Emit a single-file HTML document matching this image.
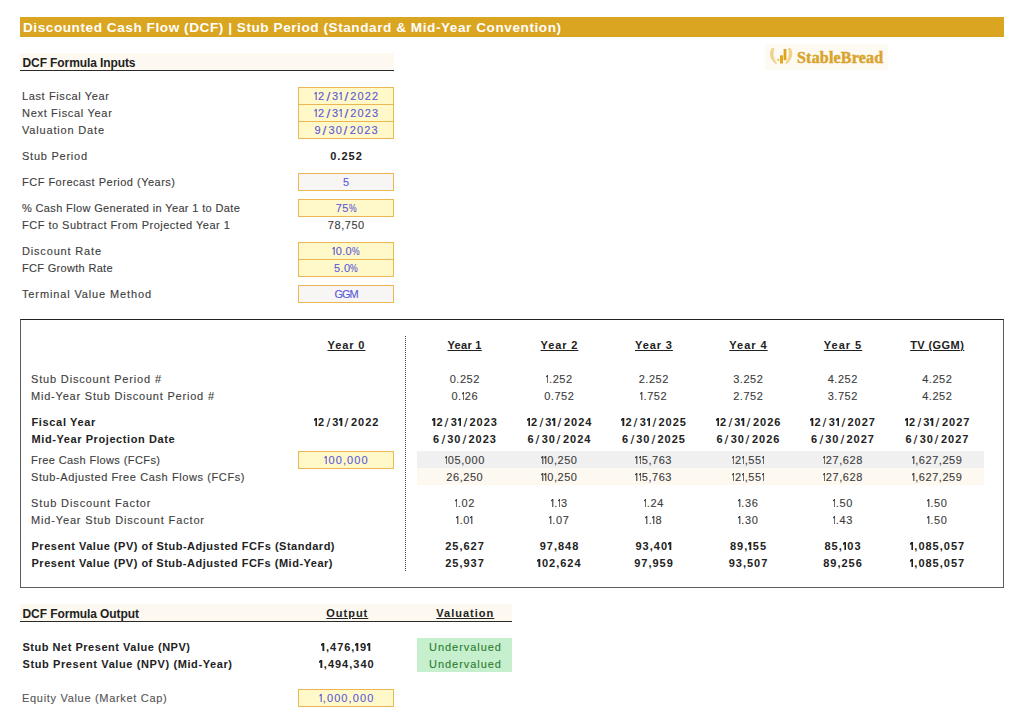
<!DOCTYPE html>
<html><head><meta charset="utf-8"><style>
html,body{margin:0;padding:0;background:#fff;width:1024px;height:723px;overflow:hidden;position:relative;}
.t{position:absolute;font-family:"Liberation Sans",sans-serif;font-size:11px;line-height:17px;white-space:nowrap;-webkit-text-stroke:0.12px currentColor;}
.b{position:absolute;}
.title{color:#fff;font-weight:bold;font-size:13.6px;-webkit-text-stroke:0;}
.logo{font-family:"Liberation Serif",serif;font-weight:bold;font-size:16px;-webkit-text-stroke:0.45px currentColor;color:#d9a42c;letter-spacing:0.2px;}
.lb{color:#3d3d3d;}
.bh{color:#222222;font-weight:bold;-webkit-text-stroke:0;}
.bv{color:#222222;font-weight:bold;-webkit-text-stroke:0;}
.nv{color:#3d3d3d;}
.in{color:#5a5ad8;}
.gr{color:#2e7d32;}
.big{font-size:12px;}
.pc{display:inline-block;transform:scaleX(0.78);margin:0 -1.1px;}
.sl{display:inline-block;transform:scale(1.25,1.15);}
.one{vertical-align:baseline;fill:currentColor;}
.u{text-decoration:underline;text-underline-offset:1px;}
</style></head><body>
<div class="b" style="left:20px;top:17px;width:984px;height:20px;background:#daa520;"></div>
<div class="t title" style="left:23px;top:17.6px;line-height:20px;letter-spacing:0.549px">Discounted Cash Flow (DCF) | Stub Period (Standard &amp; Mid-Year Convention)</div>
<div class="b" style="left:765px;top:44px;width:123px;height:26px;background:#fdfaf3;"></div>
<svg class="b" style="left:764px;top:42px" width="36" height="28" viewBox="0 0 36 28">
<path d="M8,6 C5,9.5 4.5,17 12.3,22.2 L13,20.7 C9.8,17.8 8.5,12 10.3,6 Z" fill="#f0d28c"/>
<path d="M26.3,6 C29.3,9.5 29.8,17 22,22.2 L21.3,20.7 C24.5,17.8 25.8,12 24,6 Z" fill="#f0d28c"/>
<rect x="13.3" y="16.8" width="1.9" height="2.2" fill="#e5c050"/>
<rect x="16" y="13.3" width="3" height="8.3" rx="0.6" fill="#e2a920"/>
<rect x="19.6" y="7" width="2.8" height="11.2" rx="0.6" fill="#e0a31c"/>
</svg>
<div class="t logo" style="left:797px;top:45px;line-height:26px;">StableBread</div>
<div class="b" style="left:20px;top:53px;width:374px;height:17px;background:#fdf9f1;"></div>
<div class="b" style="left:20px;top:70px;width:374px;height:1px;background:#2a2a2a;"></div>
<div class="t bh big" style="top:55px;left:22.5px;letter-spacing:-0.098px;">DCF Formula Inputs</div>
<div class="b" style="left:298px;top:87px;width:96px;height:52px;background:#fff8c9;box-sizing:border-box;border:1px solid #eab752;"></div>
<div class="b" style="left:298px;top:104px;width:96px;height:1px;background:#eab752;"></div>
<div class="b" style="left:298px;top:121px;width:96px;height:1px;background:#eab752;"></div>
<div class="b" style="left:298px;top:173px;width:96px;height:18px;background:#f7f6f4;box-sizing:border-box;border:1px solid #eab752;"></div>
<div class="b" style="left:298px;top:199px;width:96px;height:18px;background:#fff8c9;box-sizing:border-box;border:1px solid #eab752;"></div>
<div class="b" style="left:298px;top:242px;width:96px;height:35px;background:#fff8c9;box-sizing:border-box;border:1px solid #eab752;"></div>
<div class="b" style="left:298px;top:259px;width:96px;height:1px;background:#eab752;"></div>
<div class="b" style="left:298px;top:285px;width:96px;height:18px;background:#f7f6f4;box-sizing:border-box;border:1px solid #eab752;"></div>
<div class="t lb" style="top:88px;left:22px;letter-spacing:0.610px;">Last Fiscal Year</div>
<div class="t in" style="top:88px;left:298.0px;width:96px;text-align:center;padding-left:1.10px;box-sizing:border-box;letter-spacing:1.100px;"><svg class="one" width="3.0" height="8" viewBox="0 0 3.0 8" style="margin-right:1.1px"><path d="M1.65 0H2.75V8H1.65V1.7L0.45 2.4V1.3Z"/></svg>2<span class="sl" style="margin:0 1.38px;">/</span>3<svg class="one" width="3.0" height="8" viewBox="0 0 3.0 8" style="margin-right:1.1px"><path d="M1.65 0H2.75V8H1.65V1.7L0.45 2.4V1.3Z"/></svg><span class="sl" style="margin:0 1.38px;">/</span>2022</div>
<div class="t lb" style="top:105px;left:22px;letter-spacing:0.688px;">Next Fiscal Year</div>
<div class="t in" style="top:105px;left:298.0px;width:96px;text-align:center;padding-left:1.10px;box-sizing:border-box;letter-spacing:1.100px;"><svg class="one" width="3.0" height="8" viewBox="0 0 3.0 8" style="margin-right:1.1px"><path d="M1.65 0H2.75V8H1.65V1.7L0.45 2.4V1.3Z"/></svg>2<span class="sl" style="margin:0 1.38px;">/</span>3<svg class="one" width="3.0" height="8" viewBox="0 0 3.0 8" style="margin-right:1.1px"><path d="M1.65 0H2.75V8H1.65V1.7L0.45 2.4V1.3Z"/></svg><span class="sl" style="margin:0 1.38px;">/</span>2023</div>
<div class="t lb" style="top:122px;left:22px;letter-spacing:0.820px;">Valuation Date</div>
<div class="t in" style="top:122px;left:298.0px;width:96px;text-align:center;padding-left:1.10px;box-sizing:border-box;letter-spacing:1.100px;">9<span class="sl" style="margin:0 1.38px;">/</span>30<span class="sl" style="margin:0 1.38px;">/</span>2023</div>
<div class="t lb" style="top:148px;left:22px;letter-spacing:0.752px;">Stub Period</div>
<div class="t bv" style="top:148px;left:298.0px;width:96px;text-align:center;padding-left:1.00px;box-sizing:border-box;letter-spacing:1.000px;">0.252</div>
<div class="t lb" style="top:174px;left:22px;letter-spacing:0.493px;">FCF Forecast Period (Years)</div>
<div class="t in" style="top:174px;left:298.0px;width:96px;text-align:center;padding-left:1.10px;box-sizing:border-box;letter-spacing:1.100px;">5</div>
<div class="t lb" style="top:200px;left:22px;letter-spacing:0.357px;">% Cash Flow Generated in Year 1 to Date</div>
<div class="t in" style="top:200px;left:298.0px;width:96px;text-align:center;padding-left:0.35px;box-sizing:border-box;letter-spacing:0.350px;">75<span class="pc">%</span></div>
<div class="t lb" style="top:217px;left:22px;letter-spacing:0.491px;">FCF to Subtract From Projected Year 1</div>
<div class="t nv" style="top:217px;left:298.0px;width:96px;text-align:center;padding-left:0.55px;box-sizing:border-box;letter-spacing:0.550px;">78,750</div>
<div class="t lb" style="top:243px;left:22px;letter-spacing:0.826px;">Discount Rate</div>
<div class="t in" style="top:243px;left:298.0px;width:96px;text-align:center;padding-left:0.35px;box-sizing:border-box;letter-spacing:0.350px;"><svg class="one" width="3.0" height="8" viewBox="0 0 3.0 8" style="margin-right:0.35px"><path d="M1.65 0H2.75V8H1.65V1.7L0.45 2.4V1.3Z"/></svg>0.0<span class="pc">%</span></div>
<div class="t lb" style="top:260px;left:22px;letter-spacing:0.315px;">FCF Growth Rate</div>
<div class="t in" style="top:260px;left:298.0px;width:96px;text-align:center;padding-left:0.35px;box-sizing:border-box;letter-spacing:0.350px;">5.0<span class="pc">%</span></div>
<div class="t lb" style="top:286px;left:22px;letter-spacing:0.866px;">Terminal Value Method</div>
<div class="t in" style="top:286px;left:298.0px;width:96px;text-align:center;padding-left:-1.04px;box-sizing:border-box;letter-spacing:-1.038px;">GGM</div>
<div class="b" style="left:20px;top:319px;width:984px;height:269px;background:#ffffff;box-sizing:border-box;border:1px solid #5c5c5c;border-top-color:#222;"></div>
<div class="b" style="left:405px;top:336px;width:0;height:235px;border-left:1px dotted #444;"></div>
<div class="t bh u" style="top:337px;left:301.0px;width:90px;text-align:center;padding-left:0.92px;box-sizing:border-box;letter-spacing:0.916px;">Year 0</div>
<div class="t bh u" style="top:337px;left:419.5px;width:90px;text-align:center;padding-left:0.32px;box-sizing:border-box;letter-spacing:0.316px;">Year 1</div>
<div class="t bh u" style="top:337px;left:514.0px;width:90px;text-align:center;padding-left:0.92px;box-sizing:border-box;letter-spacing:0.916px;">Year 2</div>
<div class="t bh u" style="top:337px;left:608.5px;width:90px;text-align:center;padding-left:0.92px;box-sizing:border-box;letter-spacing:0.916px;">Year 3</div>
<div class="t bh u" style="top:337px;left:703.0px;width:90px;text-align:center;padding-left:1.00px;box-sizing:border-box;letter-spacing:0.996px;">Year 4</div>
<div class="t bh u" style="top:337px;left:797.5px;width:90px;text-align:center;padding-left:1.00px;box-sizing:border-box;letter-spacing:0.996px;">Year 5</div>
<div class="t bh u" style="top:337px;left:892.0px;width:90px;text-align:center;padding-left:0.43px;box-sizing:border-box;letter-spacing:0.427px;">TV (GGM)</div>
<div class="b" style="left:417px;top:451px;width:567px;height:17px;background:#f0f0f0;"></div>
<div class="b" style="left:417px;top:468px;width:567px;height:17px;background:#fdf9f1;"></div>
<div class="b" style="left:298px;top:451px;width:96px;height:18px;background:#fff8c9;box-sizing:border-box;border:1px solid #eab752;"></div>
<div class="t lb" style="top:371px;left:31px;letter-spacing:0.833px;">Stub Discount Period #</div>
<div class="t nv" style="top:371px;left:417.5px;width:94px;text-align:center;padding-left:0.55px;box-sizing:border-box;letter-spacing:0.550px;">0.252</div>
<div class="t nv" style="top:371px;left:512.0px;width:94px;text-align:center;padding-left:0.55px;box-sizing:border-box;letter-spacing:0.550px;"><svg class="one" width="2.6" height="8" viewBox="0 0 2.6 8" style="margin-right:0.55px"><path d="M1.25 0H2.35V8H1.25V1.7L0.05 2.4V1.3Z"/></svg>.252</div>
<div class="t nv" style="top:371px;left:606.5px;width:94px;text-align:center;padding-left:0.55px;box-sizing:border-box;letter-spacing:0.550px;">2.252</div>
<div class="t nv" style="top:371px;left:701.0px;width:94px;text-align:center;padding-left:0.55px;box-sizing:border-box;letter-spacing:0.550px;">3.252</div>
<div class="t nv" style="top:371px;left:795.5px;width:94px;text-align:center;padding-left:0.55px;box-sizing:border-box;letter-spacing:0.550px;">4.252</div>
<div class="t nv" style="top:371px;left:890.0px;width:94px;text-align:center;padding-left:0.55px;box-sizing:border-box;letter-spacing:0.550px;">4.252</div>
<div class="t lb" style="top:388px;left:31px;letter-spacing:0.794px;">Mid-Year Stub Discount Period #</div>
<div class="t nv" style="top:388px;left:417.5px;width:94px;text-align:center;padding-left:0.55px;box-sizing:border-box;letter-spacing:0.550px;">0.<svg class="one" width="2.6" height="8" viewBox="0 0 2.6 8" style="margin-right:0.55px"><path d="M1.25 0H2.35V8H1.25V1.7L0.05 2.4V1.3Z"/></svg>26</div>
<div class="t nv" style="top:388px;left:512.0px;width:94px;text-align:center;padding-left:0.55px;box-sizing:border-box;letter-spacing:0.550px;">0.752</div>
<div class="t nv" style="top:388px;left:606.5px;width:94px;text-align:center;padding-left:0.55px;box-sizing:border-box;letter-spacing:0.550px;"><svg class="one" width="2.6" height="8" viewBox="0 0 2.6 8" style="margin-right:0.55px"><path d="M1.25 0H2.35V8H1.25V1.7L0.05 2.4V1.3Z"/></svg>.752</div>
<div class="t nv" style="top:388px;left:701.0px;width:94px;text-align:center;padding-left:0.55px;box-sizing:border-box;letter-spacing:0.550px;">2.752</div>
<div class="t nv" style="top:388px;left:795.5px;width:94px;text-align:center;padding-left:0.55px;box-sizing:border-box;letter-spacing:0.550px;">3.752</div>
<div class="t nv" style="top:388px;left:890.0px;width:94px;text-align:center;padding-left:0.55px;box-sizing:border-box;letter-spacing:0.550px;">4.252</div>
<div class="t bh" style="top:414px;left:31.5px;letter-spacing:0.651px;">Fiscal Year</div>
<div class="t bv" style="top:414px;left:299.0px;width:94px;text-align:center;padding-left:1.00px;box-sizing:border-box;letter-spacing:1.000px;"><svg class="one" width="3.5" height="8" viewBox="0 0 3.5 8" style="margin-right:1.0px"><path d="M1.3 0H3.3V8H1.4V2.3L0 2.9V1.3Z"/></svg>2<span class="sl" style="margin:0 1.50px;font-weight:normal;">/</span>3<svg class="one" width="3.5" height="8" viewBox="0 0 3.5 8" style="margin-right:1.0px"><path d="M1.3 0H3.3V8H1.4V2.3L0 2.9V1.3Z"/></svg><span class="sl" style="margin:0 1.50px;font-weight:normal;">/</span>2022</div>
<div class="t bv" style="top:414px;left:417.5px;width:94px;text-align:center;padding-left:1.00px;box-sizing:border-box;letter-spacing:1.000px;"><svg class="one" width="3.5" height="8" viewBox="0 0 3.5 8" style="margin-right:1.0px"><path d="M1.3 0H3.3V8H1.4V2.3L0 2.9V1.3Z"/></svg>2<span class="sl" style="margin:0 1.50px;font-weight:normal;">/</span>3<svg class="one" width="3.5" height="8" viewBox="0 0 3.5 8" style="margin-right:1.0px"><path d="M1.3 0H3.3V8H1.4V2.3L0 2.9V1.3Z"/></svg><span class="sl" style="margin:0 1.50px;font-weight:normal;">/</span>2023</div>
<div class="t bv" style="top:414px;left:512.0px;width:94px;text-align:center;padding-left:1.00px;box-sizing:border-box;letter-spacing:1.000px;"><svg class="one" width="3.5" height="8" viewBox="0 0 3.5 8" style="margin-right:1.0px"><path d="M1.3 0H3.3V8H1.4V2.3L0 2.9V1.3Z"/></svg>2<span class="sl" style="margin:0 1.50px;font-weight:normal;">/</span>3<svg class="one" width="3.5" height="8" viewBox="0 0 3.5 8" style="margin-right:1.0px"><path d="M1.3 0H3.3V8H1.4V2.3L0 2.9V1.3Z"/></svg><span class="sl" style="margin:0 1.50px;font-weight:normal;">/</span>2024</div>
<div class="t bv" style="top:414px;left:606.5px;width:94px;text-align:center;padding-left:1.00px;box-sizing:border-box;letter-spacing:1.000px;"><svg class="one" width="3.5" height="8" viewBox="0 0 3.5 8" style="margin-right:1.0px"><path d="M1.3 0H3.3V8H1.4V2.3L0 2.9V1.3Z"/></svg>2<span class="sl" style="margin:0 1.50px;font-weight:normal;">/</span>3<svg class="one" width="3.5" height="8" viewBox="0 0 3.5 8" style="margin-right:1.0px"><path d="M1.3 0H3.3V8H1.4V2.3L0 2.9V1.3Z"/></svg><span class="sl" style="margin:0 1.50px;font-weight:normal;">/</span>2025</div>
<div class="t bv" style="top:414px;left:701.0px;width:94px;text-align:center;padding-left:1.00px;box-sizing:border-box;letter-spacing:1.000px;"><svg class="one" width="3.5" height="8" viewBox="0 0 3.5 8" style="margin-right:1.0px"><path d="M1.3 0H3.3V8H1.4V2.3L0 2.9V1.3Z"/></svg>2<span class="sl" style="margin:0 1.50px;font-weight:normal;">/</span>3<svg class="one" width="3.5" height="8" viewBox="0 0 3.5 8" style="margin-right:1.0px"><path d="M1.3 0H3.3V8H1.4V2.3L0 2.9V1.3Z"/></svg><span class="sl" style="margin:0 1.50px;font-weight:normal;">/</span>2026</div>
<div class="t bv" style="top:414px;left:795.5px;width:94px;text-align:center;padding-left:1.00px;box-sizing:border-box;letter-spacing:1.000px;"><svg class="one" width="3.5" height="8" viewBox="0 0 3.5 8" style="margin-right:1.0px"><path d="M1.3 0H3.3V8H1.4V2.3L0 2.9V1.3Z"/></svg>2<span class="sl" style="margin:0 1.50px;font-weight:normal;">/</span>3<svg class="one" width="3.5" height="8" viewBox="0 0 3.5 8" style="margin-right:1.0px"><path d="M1.3 0H3.3V8H1.4V2.3L0 2.9V1.3Z"/></svg><span class="sl" style="margin:0 1.50px;font-weight:normal;">/</span>2027</div>
<div class="t bv" style="top:414px;left:890.0px;width:94px;text-align:center;padding-left:1.00px;box-sizing:border-box;letter-spacing:1.000px;"><svg class="one" width="3.5" height="8" viewBox="0 0 3.5 8" style="margin-right:1.0px"><path d="M1.3 0H3.3V8H1.4V2.3L0 2.9V1.3Z"/></svg>2<span class="sl" style="margin:0 1.50px;font-weight:normal;">/</span>3<svg class="one" width="3.5" height="8" viewBox="0 0 3.5 8" style="margin-right:1.0px"><path d="M1.3 0H3.3V8H1.4V2.3L0 2.9V1.3Z"/></svg><span class="sl" style="margin:0 1.50px;font-weight:normal;">/</span>2027</div>
<div class="t bh" style="top:431px;left:31.5px;letter-spacing:0.583px;">Mid-Year Projection Date</div>
<div class="t bv" style="top:431px;left:417.5px;width:94px;text-align:center;padding-left:1.00px;box-sizing:border-box;letter-spacing:1.000px;">6<span class="sl" style="margin:0 1.50px;font-weight:normal;">/</span>30<span class="sl" style="margin:0 1.50px;font-weight:normal;">/</span>2023</div>
<div class="t bv" style="top:431px;left:512.0px;width:94px;text-align:center;padding-left:1.00px;box-sizing:border-box;letter-spacing:1.000px;">6<span class="sl" style="margin:0 1.50px;font-weight:normal;">/</span>30<span class="sl" style="margin:0 1.50px;font-weight:normal;">/</span>2024</div>
<div class="t bv" style="top:431px;left:606.5px;width:94px;text-align:center;padding-left:1.00px;box-sizing:border-box;letter-spacing:1.000px;">6<span class="sl" style="margin:0 1.50px;font-weight:normal;">/</span>30<span class="sl" style="margin:0 1.50px;font-weight:normal;">/</span>2025</div>
<div class="t bv" style="top:431px;left:701.0px;width:94px;text-align:center;padding-left:1.00px;box-sizing:border-box;letter-spacing:1.000px;">6<span class="sl" style="margin:0 1.50px;font-weight:normal;">/</span>30<span class="sl" style="margin:0 1.50px;font-weight:normal;">/</span>2026</div>
<div class="t bv" style="top:431px;left:795.5px;width:94px;text-align:center;padding-left:1.00px;box-sizing:border-box;letter-spacing:1.000px;">6<span class="sl" style="margin:0 1.50px;font-weight:normal;">/</span>30<span class="sl" style="margin:0 1.50px;font-weight:normal;">/</span>2027</div>
<div class="t bv" style="top:431px;left:890.0px;width:94px;text-align:center;padding-left:1.00px;box-sizing:border-box;letter-spacing:1.000px;">6<span class="sl" style="margin:0 1.50px;font-weight:normal;">/</span>30<span class="sl" style="margin:0 1.50px;font-weight:normal;">/</span>2027</div>
<div class="t lb" style="top:452px;left:31px;letter-spacing:0.410px;">Free Cash Flows (FCFs)</div>
<div class="t in" style="top:452px;left:299.0px;width:94px;text-align:center;padding-left:1.10px;box-sizing:border-box;letter-spacing:1.100px;"><svg class="one" width="3.0" height="8" viewBox="0 0 3.0 8" style="margin-right:1.1px"><path d="M1.65 0H2.75V8H1.65V1.7L0.45 2.4V1.3Z"/></svg>00,000</div>
<div class="t nv" style="top:452px;left:417.5px;width:94px;text-align:center;padding-left:0.55px;box-sizing:border-box;letter-spacing:0.550px;"><svg class="one" width="2.6" height="8" viewBox="0 0 2.6 8" style="margin-right:0.55px"><path d="M1.25 0H2.35V8H1.25V1.7L0.05 2.4V1.3Z"/></svg>05,000</div>
<div class="t nv" style="top:452px;left:512.0px;width:94px;text-align:center;padding-left:0.55px;box-sizing:border-box;letter-spacing:0.550px;"><svg class="one" width="2.6" height="8" viewBox="0 0 2.6 8" style="margin-right:0.55px"><path d="M1.25 0H2.35V8H1.25V1.7L0.05 2.4V1.3Z"/></svg><svg class="one" width="2.6" height="8" viewBox="0 0 2.6 8" style="margin-right:0.55px"><path d="M1.25 0H2.35V8H1.25V1.7L0.05 2.4V1.3Z"/></svg>0,250</div>
<div class="t nv" style="top:452px;left:606.5px;width:94px;text-align:center;padding-left:0.55px;box-sizing:border-box;letter-spacing:0.550px;"><svg class="one" width="2.6" height="8" viewBox="0 0 2.6 8" style="margin-right:0.55px"><path d="M1.25 0H2.35V8H1.25V1.7L0.05 2.4V1.3Z"/></svg><svg class="one" width="2.6" height="8" viewBox="0 0 2.6 8" style="margin-right:0.55px"><path d="M1.25 0H2.35V8H1.25V1.7L0.05 2.4V1.3Z"/></svg>5,763</div>
<div class="t nv" style="top:452px;left:701.0px;width:94px;text-align:center;padding-left:0.55px;box-sizing:border-box;letter-spacing:0.550px;"><svg class="one" width="2.6" height="8" viewBox="0 0 2.6 8" style="margin-right:0.55px"><path d="M1.25 0H2.35V8H1.25V1.7L0.05 2.4V1.3Z"/></svg>2<svg class="one" width="2.6" height="8" viewBox="0 0 2.6 8" style="margin-right:0.55px"><path d="M1.25 0H2.35V8H1.25V1.7L0.05 2.4V1.3Z"/></svg>,55<svg class="one" width="2.6" height="8" viewBox="0 0 2.6 8" style="margin-right:0.55px"><path d="M1.25 0H2.35V8H1.25V1.7L0.05 2.4V1.3Z"/></svg></div>
<div class="t nv" style="top:452px;left:795.5px;width:94px;text-align:center;padding-left:0.55px;box-sizing:border-box;letter-spacing:0.550px;"><svg class="one" width="2.6" height="8" viewBox="0 0 2.6 8" style="margin-right:0.55px"><path d="M1.25 0H2.35V8H1.25V1.7L0.05 2.4V1.3Z"/></svg>27,628</div>
<div class="t nv" style="top:452px;left:890.0px;width:94px;text-align:center;padding-left:0.55px;box-sizing:border-box;letter-spacing:0.550px;"><svg class="one" width="2.6" height="8" viewBox="0 0 2.6 8" style="margin-right:0.55px"><path d="M1.25 0H2.35V8H1.25V1.7L0.05 2.4V1.3Z"/></svg>,627,259</div>
<div class="t lb" style="top:469px;left:31px;letter-spacing:0.598px;">Stub-Adjusted Free Cash Flows (FCFs)</div>
<div class="t nv" style="top:469px;left:417.5px;width:94px;text-align:center;padding-left:0.55px;box-sizing:border-box;letter-spacing:0.550px;">26,250</div>
<div class="t nv" style="top:469px;left:512.0px;width:94px;text-align:center;padding-left:0.55px;box-sizing:border-box;letter-spacing:0.550px;"><svg class="one" width="2.6" height="8" viewBox="0 0 2.6 8" style="margin-right:0.55px"><path d="M1.25 0H2.35V8H1.25V1.7L0.05 2.4V1.3Z"/></svg><svg class="one" width="2.6" height="8" viewBox="0 0 2.6 8" style="margin-right:0.55px"><path d="M1.25 0H2.35V8H1.25V1.7L0.05 2.4V1.3Z"/></svg>0,250</div>
<div class="t nv" style="top:469px;left:606.5px;width:94px;text-align:center;padding-left:0.55px;box-sizing:border-box;letter-spacing:0.550px;"><svg class="one" width="2.6" height="8" viewBox="0 0 2.6 8" style="margin-right:0.55px"><path d="M1.25 0H2.35V8H1.25V1.7L0.05 2.4V1.3Z"/></svg><svg class="one" width="2.6" height="8" viewBox="0 0 2.6 8" style="margin-right:0.55px"><path d="M1.25 0H2.35V8H1.25V1.7L0.05 2.4V1.3Z"/></svg>5,763</div>
<div class="t nv" style="top:469px;left:701.0px;width:94px;text-align:center;padding-left:0.55px;box-sizing:border-box;letter-spacing:0.550px;"><svg class="one" width="2.6" height="8" viewBox="0 0 2.6 8" style="margin-right:0.55px"><path d="M1.25 0H2.35V8H1.25V1.7L0.05 2.4V1.3Z"/></svg>2<svg class="one" width="2.6" height="8" viewBox="0 0 2.6 8" style="margin-right:0.55px"><path d="M1.25 0H2.35V8H1.25V1.7L0.05 2.4V1.3Z"/></svg>,55<svg class="one" width="2.6" height="8" viewBox="0 0 2.6 8" style="margin-right:0.55px"><path d="M1.25 0H2.35V8H1.25V1.7L0.05 2.4V1.3Z"/></svg></div>
<div class="t nv" style="top:469px;left:795.5px;width:94px;text-align:center;padding-left:0.55px;box-sizing:border-box;letter-spacing:0.550px;"><svg class="one" width="2.6" height="8" viewBox="0 0 2.6 8" style="margin-right:0.55px"><path d="M1.25 0H2.35V8H1.25V1.7L0.05 2.4V1.3Z"/></svg>27,628</div>
<div class="t nv" style="top:469px;left:890.0px;width:94px;text-align:center;padding-left:0.55px;box-sizing:border-box;letter-spacing:0.550px;"><svg class="one" width="2.6" height="8" viewBox="0 0 2.6 8" style="margin-right:0.55px"><path d="M1.25 0H2.35V8H1.25V1.7L0.05 2.4V1.3Z"/></svg>,627,259</div>
<div class="t lb" style="top:495px;left:31px;letter-spacing:0.884px;">Stub Discount Factor</div>
<div class="t nv" style="top:495px;left:417.5px;width:94px;text-align:center;padding-left:0.55px;box-sizing:border-box;letter-spacing:0.550px;"><svg class="one" width="2.6" height="8" viewBox="0 0 2.6 8" style="margin-right:0.55px"><path d="M1.25 0H2.35V8H1.25V1.7L0.05 2.4V1.3Z"/></svg>.02</div>
<div class="t nv" style="top:495px;left:512.0px;width:94px;text-align:center;padding-left:0.55px;box-sizing:border-box;letter-spacing:0.550px;"><svg class="one" width="2.6" height="8" viewBox="0 0 2.6 8" style="margin-right:0.55px"><path d="M1.25 0H2.35V8H1.25V1.7L0.05 2.4V1.3Z"/></svg>.<svg class="one" width="2.6" height="8" viewBox="0 0 2.6 8" style="margin-right:0.55px"><path d="M1.25 0H2.35V8H1.25V1.7L0.05 2.4V1.3Z"/></svg>3</div>
<div class="t nv" style="top:495px;left:606.5px;width:94px;text-align:center;padding-left:0.55px;box-sizing:border-box;letter-spacing:0.550px;"><svg class="one" width="2.6" height="8" viewBox="0 0 2.6 8" style="margin-right:0.55px"><path d="M1.25 0H2.35V8H1.25V1.7L0.05 2.4V1.3Z"/></svg>.24</div>
<div class="t nv" style="top:495px;left:701.0px;width:94px;text-align:center;padding-left:0.55px;box-sizing:border-box;letter-spacing:0.550px;"><svg class="one" width="2.6" height="8" viewBox="0 0 2.6 8" style="margin-right:0.55px"><path d="M1.25 0H2.35V8H1.25V1.7L0.05 2.4V1.3Z"/></svg>.36</div>
<div class="t nv" style="top:495px;left:795.5px;width:94px;text-align:center;padding-left:0.55px;box-sizing:border-box;letter-spacing:0.550px;"><svg class="one" width="2.6" height="8" viewBox="0 0 2.6 8" style="margin-right:0.55px"><path d="M1.25 0H2.35V8H1.25V1.7L0.05 2.4V1.3Z"/></svg>.50</div>
<div class="t nv" style="top:495px;left:890.0px;width:94px;text-align:center;padding-left:0.55px;box-sizing:border-box;letter-spacing:0.550px;"><svg class="one" width="2.6" height="8" viewBox="0 0 2.6 8" style="margin-right:0.55px"><path d="M1.25 0H2.35V8H1.25V1.7L0.05 2.4V1.3Z"/></svg>.50</div>
<div class="t lb" style="top:512px;left:31px;letter-spacing:0.844px;">Mid-Year Stub Discount Factor</div>
<div class="t nv" style="top:512px;left:417.5px;width:94px;text-align:center;padding-left:0.55px;box-sizing:border-box;letter-spacing:0.550px;"><svg class="one" width="2.6" height="8" viewBox="0 0 2.6 8" style="margin-right:0.55px"><path d="M1.25 0H2.35V8H1.25V1.7L0.05 2.4V1.3Z"/></svg>.0<svg class="one" width="2.6" height="8" viewBox="0 0 2.6 8" style="margin-right:0.55px"><path d="M1.25 0H2.35V8H1.25V1.7L0.05 2.4V1.3Z"/></svg></div>
<div class="t nv" style="top:512px;left:512.0px;width:94px;text-align:center;padding-left:0.55px;box-sizing:border-box;letter-spacing:0.550px;"><svg class="one" width="2.6" height="8" viewBox="0 0 2.6 8" style="margin-right:0.55px"><path d="M1.25 0H2.35V8H1.25V1.7L0.05 2.4V1.3Z"/></svg>.07</div>
<div class="t nv" style="top:512px;left:606.5px;width:94px;text-align:center;padding-left:0.55px;box-sizing:border-box;letter-spacing:0.550px;"><svg class="one" width="2.6" height="8" viewBox="0 0 2.6 8" style="margin-right:0.55px"><path d="M1.25 0H2.35V8H1.25V1.7L0.05 2.4V1.3Z"/></svg>.<svg class="one" width="2.6" height="8" viewBox="0 0 2.6 8" style="margin-right:0.55px"><path d="M1.25 0H2.35V8H1.25V1.7L0.05 2.4V1.3Z"/></svg>8</div>
<div class="t nv" style="top:512px;left:701.0px;width:94px;text-align:center;padding-left:0.55px;box-sizing:border-box;letter-spacing:0.550px;"><svg class="one" width="2.6" height="8" viewBox="0 0 2.6 8" style="margin-right:0.55px"><path d="M1.25 0H2.35V8H1.25V1.7L0.05 2.4V1.3Z"/></svg>.30</div>
<div class="t nv" style="top:512px;left:795.5px;width:94px;text-align:center;padding-left:0.55px;box-sizing:border-box;letter-spacing:0.550px;"><svg class="one" width="2.6" height="8" viewBox="0 0 2.6 8" style="margin-right:0.55px"><path d="M1.25 0H2.35V8H1.25V1.7L0.05 2.4V1.3Z"/></svg>.43</div>
<div class="t nv" style="top:512px;left:890.0px;width:94px;text-align:center;padding-left:0.55px;box-sizing:border-box;letter-spacing:0.550px;"><svg class="one" width="2.6" height="8" viewBox="0 0 2.6 8" style="margin-right:0.55px"><path d="M1.25 0H2.35V8H1.25V1.7L0.05 2.4V1.3Z"/></svg>.50</div>
<div class="t bh" style="top:538px;left:31.5px;letter-spacing:0.511px;">Present Value (PV) of Stub-Adjusted FCFs (Standard)</div>
<div class="t bv" style="top:538px;left:417.5px;width:94px;text-align:center;padding-left:1.00px;box-sizing:border-box;letter-spacing:1.000px;">25,627</div>
<div class="t bv" style="top:538px;left:512.0px;width:94px;text-align:center;padding-left:1.00px;box-sizing:border-box;letter-spacing:1.000px;">97,848</div>
<div class="t bv" style="top:538px;left:606.5px;width:94px;text-align:center;padding-left:1.00px;box-sizing:border-box;letter-spacing:1.000px;">93,40<svg class="one" width="3.5" height="8" viewBox="0 0 3.5 8" style="margin-right:1.0px"><path d="M1.3 0H3.3V8H1.4V2.3L0 2.9V1.3Z"/></svg></div>
<div class="t bv" style="top:538px;left:701.0px;width:94px;text-align:center;padding-left:1.00px;box-sizing:border-box;letter-spacing:1.000px;">89,<svg class="one" width="3.5" height="8" viewBox="0 0 3.5 8" style="margin-right:1.0px"><path d="M1.3 0H3.3V8H1.4V2.3L0 2.9V1.3Z"/></svg>55</div>
<div class="t bv" style="top:538px;left:795.5px;width:94px;text-align:center;padding-left:1.00px;box-sizing:border-box;letter-spacing:1.000px;">85,<svg class="one" width="3.5" height="8" viewBox="0 0 3.5 8" style="margin-right:1.0px"><path d="M1.3 0H3.3V8H1.4V2.3L0 2.9V1.3Z"/></svg>03</div>
<div class="t bv" style="top:538px;left:890.0px;width:94px;text-align:center;padding-left:1.00px;box-sizing:border-box;letter-spacing:1.000px;"><svg class="one" width="3.5" height="8" viewBox="0 0 3.5 8" style="margin-right:1.0px"><path d="M1.3 0H3.3V8H1.4V2.3L0 2.9V1.3Z"/></svg>,085,057</div>
<div class="t bh" style="top:555px;left:31.5px;letter-spacing:0.507px;">Present Value (PV) of Stub-Adjusted FCFs (Mid-Year)</div>
<div class="t bv" style="top:555px;left:417.5px;width:94px;text-align:center;padding-left:1.00px;box-sizing:border-box;letter-spacing:1.000px;">25,937</div>
<div class="t bv" style="top:555px;left:512.0px;width:94px;text-align:center;padding-left:1.00px;box-sizing:border-box;letter-spacing:1.000px;"><svg class="one" width="3.5" height="8" viewBox="0 0 3.5 8" style="margin-right:1.0px"><path d="M1.3 0H3.3V8H1.4V2.3L0 2.9V1.3Z"/></svg>02,624</div>
<div class="t bv" style="top:555px;left:606.5px;width:94px;text-align:center;padding-left:1.00px;box-sizing:border-box;letter-spacing:1.000px;">97,959</div>
<div class="t bv" style="top:555px;left:701.0px;width:94px;text-align:center;padding-left:1.00px;box-sizing:border-box;letter-spacing:1.000px;">93,507</div>
<div class="t bv" style="top:555px;left:795.5px;width:94px;text-align:center;padding-left:1.00px;box-sizing:border-box;letter-spacing:1.000px;">89,256</div>
<div class="t bv" style="top:555px;left:890.0px;width:94px;text-align:center;padding-left:1.00px;box-sizing:border-box;letter-spacing:1.000px;"><svg class="one" width="3.5" height="8" viewBox="0 0 3.5 8" style="margin-right:1.0px"><path d="M1.3 0H3.3V8H1.4V2.3L0 2.9V1.3Z"/></svg>,085,057</div>
<div class="b" style="left:20px;top:604px;width:492px;height:17px;background:#fdf9f1;"></div>
<div class="b" style="left:20px;top:621px;width:492px;height:1px;background:#2a2a2a;"></div>
<div class="t bh big" style="top:606px;left:22.5px;letter-spacing:-0.087px;">DCF Formula Output</div>
<div class="t bh u" style="top:605px;left:301.8px;width:90px;text-align:center;padding-left:0.99px;box-sizing:border-box;letter-spacing:0.992px;">Output</div>
<div class="t bh u" style="top:605px;left:417.8px;width:94px;text-align:center;padding-left:1.01px;box-sizing:border-box;letter-spacing:1.013px;">Valuation</div>
<div class="b" style="left:417px;top:638px;width:95px;height:34px;background:#c6efce;"></div>
<div class="t bh" style="top:639px;left:22.5px;letter-spacing:0.521px;">Stub Net Present Value (NPV)</div>
<div class="t bh" style="top:656px;left:22.5px;letter-spacing:0.607px;">Stub Present Value (NPV) (Mid-Year)</div>
<div class="t bv" style="top:639px;left:299.0px;width:94px;text-align:center;padding-left:1.00px;box-sizing:border-box;letter-spacing:1.000px;"><svg class="one" width="3.5" height="8" viewBox="0 0 3.5 8" style="margin-right:1.0px"><path d="M1.3 0H3.3V8H1.4V2.3L0 2.9V1.3Z"/></svg>,476,<svg class="one" width="3.5" height="8" viewBox="0 0 3.5 8" style="margin-right:1.0px"><path d="M1.3 0H3.3V8H1.4V2.3L0 2.9V1.3Z"/></svg>9<svg class="one" width="3.5" height="8" viewBox="0 0 3.5 8" style="margin-right:1.0px"><path d="M1.3 0H3.3V8H1.4V2.3L0 2.9V1.3Z"/></svg></div>
<div class="t bv" style="top:656px;left:299.5px;width:94px;text-align:center;padding-left:1.00px;box-sizing:border-box;letter-spacing:1.000px;"><svg class="one" width="3.5" height="8" viewBox="0 0 3.5 8" style="margin-right:1.0px"><path d="M1.3 0H3.3V8H1.4V2.3L0 2.9V1.3Z"/></svg>,494,340</div>
<div class="t gr" style="top:639px;left:418.0px;width:94px;text-align:center;padding-left:0.96px;box-sizing:border-box;letter-spacing:0.963px;">Undervalued</div>
<div class="t gr" style="top:656px;left:418.0px;width:94px;text-align:center;padding-left:0.96px;box-sizing:border-box;letter-spacing:0.963px;">Undervalued</div>
<div class="b" style="left:298px;top:689px;width:96px;height:18px;background:#fff8c9;box-sizing:border-box;border:1px solid #eab752;"></div>
<div class="t lb" style="top:690px;left:22px;letter-spacing:0.688px;color:#555;">Equity Value (Market Cap)</div>
<div class="t in" style="top:690px;left:298.0px;width:96px;text-align:center;padding-left:1.10px;box-sizing:border-box;letter-spacing:1.100px;"><svg class="one" width="3.0" height="8" viewBox="0 0 3.0 8" style="margin-right:1.1px"><path d="M1.65 0H2.75V8H1.65V1.7L0.45 2.4V1.3Z"/></svg>,000,000</div>
</body></html>
